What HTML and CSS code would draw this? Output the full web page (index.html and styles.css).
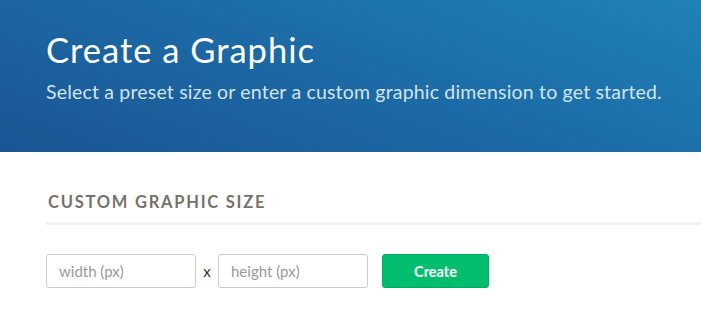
FILE: index.html
```html
<!DOCTYPE html>
<html>
<head>
<meta charset="utf-8">
<link rel="stylesheet" href="styles.css">
</head>
<body>
<header class="hero">
  <h1 class="hero-title">Create a Graphic</h1>
  <p class="hero-sub">Select a preset size or enter a custom graphic dimension to get started.</p>
</header>
<section class="custom">
  <h2 class="section-title">CUSTOM GRAPHIC SIZE</h2>
  <form class="size-form">
    <input class="size-input" type="text" placeholder="width (px)">
    <span class="times">x</span>
    <input class="size-input" type="text" placeholder="height (px)">
    <button class="create-btn" type="button">Create</button>
  </form>
</section>
</body>
</html>
```
FILE: styles.css
```css
* { box-sizing: border-box; }
html, body { margin: 0; padding: 0; background: #fff; }
body { font-family: Lato, "Open Sans", sans-serif; overflow: hidden; }

.hero {
  height: 152px;
  padding: 30px 0 0 46px;
  background: linear-gradient(20deg, #1a5594 0%, #1c6aa5 50%, #1f82b6 100%);
  color: #fff;
}
.hero-title {
  margin: 0;
  font-size: 34.5px;
  font-weight: 400;
  letter-spacing: 1px;
  line-height: 40px;
}
.hero-sub {
  margin: 10px 0 0;
  font-size: 19.5px;
  letter-spacing: 0.18px;
  line-height: 24px;
  color: #d3e4f1;
}

.custom {
  padding: 41px 0 0 46px;
}
.section-title {
  margin: 0;
  padding: 0 0 11px 2px;
  font-size: 16.5px;
  font-weight: 700;
  letter-spacing: 1.75px;
  line-height: 18px;
  color: #77716d;
  border-bottom: 3px solid #f0f0f5;
}
.size-form {
  display: flex;
  align-items: center;
  margin-top: 29px;
}
.size-input {
  width: 150px;
  height: 34px;
  border: 1px solid #cccccc;
  border-radius: 3px;
  padding: 0 12px;
  font-family: Lato, "Open Sans", sans-serif;
  font-size: 15px;
  color: #333;
  outline: none;
}
.size-input::placeholder { color: #9a9a9a; }
.times {
  width: 22px;
  text-align: center;
  font-size: 15px;
  color: #333;
}
.create-btn {
  margin-left: 14px;
  width: 107px;
  height: 34px;
  border: 1px solid #00ab62;
  border-radius: 3px;
  background: #00be6e;
  color: #fff;
  font-family: Lato, "Open Sans", sans-serif;
  font-weight: 700;
  font-size: 14.5px;
}
```
